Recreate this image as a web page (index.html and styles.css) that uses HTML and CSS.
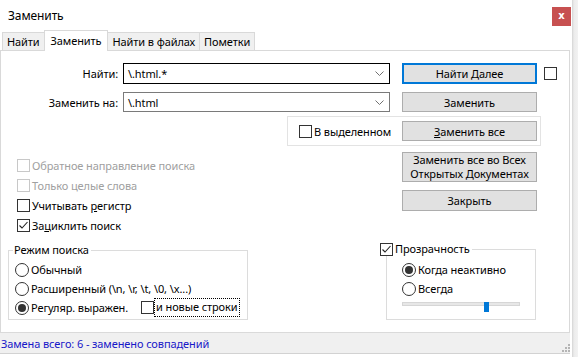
FILE: index.html
```html
<!DOCTYPE html>
<html lang="ru">
<head>
    <meta charset="UTF-8">
    <title>Заменить</title>
    <link rel="stylesheet" href="styles.css">
</head>
<body>
    <div class="screen">
        <div class="window">
            <div class="titlebar">
                <span class="title">Заменить</span>
                <span class="close">x</span>
            </div>
            <div class="tabs">
                <div class="tab">Найти</div>
                <div class="tab active">Заменить</div>
                <div class="tab">Найти в файлах</div>
                <div class="tab">Пометки</div>
            </div>
            <div class="panel">
                <div class="top">
                    <div class="fields">
                        <div class="field find">
                            <label class="fieldLabel">Найти:</label>
                            <div class="combo focus">
                                <span>\.html.*</span>
                                <svg class="chevron" width="9" height="5" viewBox="0 0 9 5"><path d="M0.5 0.5 L4.5 4.5 L8.5 0.5" fill="none" stroke="#707070" stroke-width="1"/></svg>
                            </div>
                        </div>
                        <div class="field replace">
                            <label class="fieldLabel">Заменить на:</label>
                            <div class="combo">
                                <span>\.html</span>
                                <svg class="chevron" width="9" height="5" viewBox="0 0 9 5"><path d="M0.5 0.5 L4.5 4.5 L8.5 0.5" fill="none" stroke="#707070" stroke-width="1"/></svg>
                            </div>
                        </div>
                    </div>
                    <div class="actions">
                        <div class="btnRow">
                            <button class="btn default">Найти Далее</button>
                            <span class="check sideCheck"></span>
                        </div>
                        <button class="btn gapTop">Заменить</button>
                    </div>
                </div>
                <div class="selection">
                    <div class="opt"><span class="check"></span><span>В выделенном</span></div>
                    <button class="btn selBtn"><u>З</u>аменить все</button>
                </div>
                <div class="middle">
                    <div class="options">
                        <div class="opt disabled"><span class="check"></span><span>Обратное направление поиска</span></div>
                        <div class="opt disabled"><span class="check"></span><span>Только целые слова</span></div>
                        <div class="opt"><span class="check"></span><span>Учитывать <u>р</u>егистр</span></div>
                        <div class="opt"><span class="check"><svg width="11" height="11" viewBox="0 0 11 11"><path d="M1.5 5.5 L4 8 L9.5 2" fill="none" stroke="#222" stroke-width="1.1"/></svg></span><span>За<u>ц</u>иклить поиск</span></div>
                    </div>
                    <div class="actions">
                        <button class="btn tall"><span class="line">Заменить все во Всех</span><span class="line">Открытых <u>Д</u>окументах</span></button>
                        <button class="btn closeBtn">Закрыть</button>
                    </div>
                </div>
                <div class="bottom">
                    <div class="group mode">
                        <div class="groupTitle">Режим поиска</div>
                        <div class="opt radioRow"><span class="radio"></span><span>Обычный</span></div>
                        <div class="opt radioRow"><span class="radio"></span><span>Расширенный (\n, \r, \t, \0, \x...)</span></div>
                        <div class="opt radioRow"><span class="radio on"></span><span class="regexLabel">Регуляр. выражен.</span><span class="check dotCheck"></span><span class="focusText">и новые строки</span></div>
                    </div>
                    <div class="group transp">
                        <div class="groupTitle opt"><span class="check"><svg width="11" height="11" viewBox="0 0 11 11"><path d="M1.5 5.5 L4 8 L9.5 2" fill="none" stroke="#222" stroke-width="1.1"/></svg></span><span>Прозрачность</span></div>
                        <div class="opt radioRow"><span class="radio on"></span><span>Когда неактивно</span></div>
                        <div class="opt radioRow"><span class="radio"></span><span>Всегда</span></div>
                        <div class="slider">
                            <div class="track"></div>
                            <div class="thumb"></div>
                        </div>
                    </div>
                </div>
            </div>
            <div class="status">
                <span class="statusText">Замена всего: 6 - заменено совпадений</span>
                <svg class="grip" width="9" height="9" viewBox="0 0 9 9">
                    <rect x="7" y="1" width="2" height="2" fill="#b4b4b4"/>
                    <rect x="4" y="4" width="2" height="2" fill="#b4b4b4"/>
                    <rect x="7" y="4" width="2" height="2" fill="#b4b4b4"/>
                    <rect x="1" y="7" width="2" height="2" fill="#b4b4b4"/>
                    <rect x="4" y="7" width="2" height="2" fill="#b4b4b4"/>
                    <rect x="7" y="7" width="2" height="2" fill="#b4b4b4"/>
                </svg>
            </div>
        </div>
        <div class="edge"></div>
    </div>
</body>
</html>
```

FILE: styles.css
```css
html, body {
    margin: 0;
    padding: 0;
    font-family: "Noto Sans", "Open Sans", sans-serif;
    font-size: 11px;
    letter-spacing: -0.1px;
    color: #000;
    background: #fff;
    user-select: none;
}
div.screen {
    display: flex;
    width: 578px;
    height: 357px;
    overflow: hidden;
}
div.window {
    width: 572px;
    display: flex;
    flex-direction: column;
    background: #fff;
}
div.edge {
    flex: 1;
    background: linear-gradient(to right, #d4d4d4, #ececec 2px, #f2f2f2);
}

/* title + tabs */
div.titlebar {
    height: 30px;
    display: flex;
    flex: none;
}
span.title {
    padding: 8px 0 0 8px;
    line-height: 15px;
    font-size: 12px;
}
span.close {
    margin: 7px 1px 0 auto;
    width: 19px;
    height: 19px;
    background: #c75050;
    color: #fff;
    font: bold 10px/18px "DejaVu Sans", sans-serif;
    text-align: center;
}
div.tabs {
    height: 20px;
    flex: none;
    display: flex;
    align-items: flex-end;
    padding-left: 2px;
}
div.tab {
    height: 17px;
    line-height: 17px;
    padding: 0 4px;
    background: #f0f0f0;
    border: 1px solid #d9d9d9;
    border-bottom: none;
    margin-right: -1px;
}
div.tab.active {
    height: 20px;
    line-height: 19px;
    padding: 0 6px;
    background: #fff;
    margin-bottom: -1px;
    position: relative;
    z-index: 1;
}

/* panel */
div.panel {
    height: 282px;
    flex: none;
    box-sizing: border-box;
    border: 1px solid #d9d9d9;
    border-bottom: none;
    margin-right: 2px;
}
div.top {
    display: flex;
    margin-top: 12px;
}
div.fields, div.options {
    width: 401px;
    flex: none;
}
div.field {
    display: flex;
    height: 21px;
}
div.field.replace {
    margin-top: 8px;
    height: 20px;
}
label.fieldLabel {
    width: 122px;
    box-sizing: border-box;
    padding-right: 5px;
    text-align: right;
    align-self: center;
}
div.combo {
    width: 267px;
    box-sizing: border-box;
    border: 1px solid #7a7a7a;
    display: flex;
    align-items: center;
    padding-left: 4px;
}
div.combo.focus {
    border-color: #000;
}
svg.chevron {
    margin-left: auto;
    margin-right: 5px;
}
div.actions {
    display: flex;
    flex-direction: column;
    align-items: flex-start;
}
div.btnRow {
    display: flex;
    align-items: center;
}
button.btn {
    box-sizing: border-box;
    width: 135px;
    height: 20px;
    padding: 0;
    background: #e1e1e1;
    border: 1px solid #adadad;
    font: inherit;
    letter-spacing: inherit;
    color: #000;
}
button.btn.default {
    height: 21px;
    border: 2px solid #0078d7;
}
button.btn.gapTop {
    margin-top: 8px;
}
button.btn.tall {
    height: 30px;
    margin-top: 6px;
    display: flex;
    flex-direction: column;
    align-items: center;
    justify-content: center;
}
span.line {
    display: block;
    height: 14px;
    line-height: 14px;
}
button.btn.closeBtn {
    height: 21px;
    margin-top: 8px;
}
span.check.sideCheck {
    margin-left: 7px;
}

/* checkboxes, radios */
div.opt {
    display: flex;
    align-items: center;
    height: 20px;
    white-space: nowrap;
}
span.check {
    width: 13px;
    height: 13px;
    box-sizing: border-box;
    border: 1px solid #333;
    background: #fff;
    flex: none;
    margin-right: 2px;
    display: flex;
}
div.opt.disabled {
    color: #a0a0a0;
}
div.opt.disabled span.check {
    border-color: #c8c8c8;
}
span.radio {
    width: 14px;
    height: 14px;
    box-sizing: border-box;
    border: 1px solid #333;
    border-radius: 50%;
    background: #fff;
    flex: none;
    margin-right: 2px;
    display: flex;
    align-items: center;
    justify-content: center;
}
span.radio.on::after {
    content: "";
    width: 8px;
    height: 8px;
    border-radius: 50%;
    background: #333;
}

div.selection {
    margin: 4px 0 0 286px;
    width: 254px;
    height: 30px;
    box-sizing: border-box;
    border: 1px solid #e3e3e3;
    display: flex;
    align-items: center;
    padding-left: 11px;
}
button.btn.selBtn {
    margin-left: auto;
    margin-right: 3px;
}

div.middle {
    display: flex;
}
div.options {
    margin-top: 9px;
    padding-left: 16px;
    box-sizing: border-box;
}

/* group boxes */
div.bottom {
    display: flex;
    align-items: flex-start;
    margin-top: 15px;
}
div.group {
    position: relative;
    box-sizing: border-box;
    border: 1px solid #dcdcdc;
}
div.groupTitle {
    position: absolute;
    top: -8px;
    left: 4px;
    line-height: 14px;
    height: 14px;
    padding: 0 2px 0 1px;
    background: #fff;
}
div.group.mode {
    margin-left: 7px;
    width: 240px;
    height: 70px;
    padding: 9px 0 0 6px;
}
div.group.transp {
    margin: -1px 0 0 138px;
    width: 150px;
    height: 71px;
    padding: 10px 0 0 15px;
}
div.group.transp div.groupTitle {
    left: -7px;
    padding: 0 2px 0 0;
}
div.radioRow {
    height: 19px;
}
span.regexLabel {
    width: 110px;
}
span.check.dotCheck {
    margin-right: 0;
}
span.focusText {
    border: 1px dotted #000;
    padding: 1px 1px 2px 1px;
    line-height: 14px;
}
div.slider {
    position: relative;
    width: 118px;
    height: 10px;
    margin-top: 4px;
}
div.track {
    margin-top: 3px;
    height: 4px;
    background: #e7e7e7;
    border: 1px solid #d6d6d6;
    box-sizing: border-box;
}
div.thumb {
    position: absolute;
    top: 0;
    left: 82px;
    width: 5px;
    height: 10px;
    background: #0078d7;
}

/* status bar */
div.status {
    height: 20px;
    flex: none;
    display: flex;
    align-items: center;
    background: #f0f0f0;
    border-top: 1px solid #dadada;
    border-bottom: 1px solid #d2d2d2;
    margin-right: 2px;
}
span.statusText {
    padding-left: 1px;
    color: #1818c8;
}
svg.grip {
    margin: 9px 0 0 auto;
}
```
